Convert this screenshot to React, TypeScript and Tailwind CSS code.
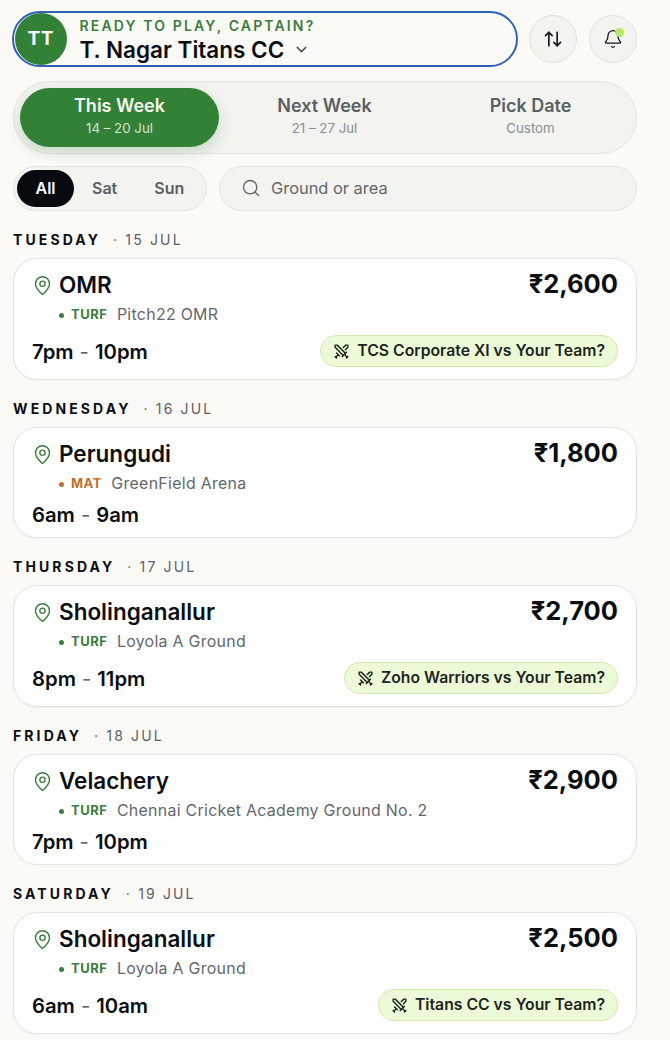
import { ArrowUpDown, Bell, ChevronDown, MapPin, Search, Swords } from "lucide-react";

type Item = {
  day: string;
  date: string;
  area: string;
  price: string;
  kind: "TURF" | "MAT";
  ground: string;
  time: [string, string];
  match?: string;
};

const items: Item[] = [
  { day: "TUESDAY", date: "15 JUL", area: "OMR", price: "₹2,600", kind: "TURF", ground: "Pitch22 OMR", time: ["7pm", "10pm"], match: "TCS Corporate XI vs Your Team?" },
  { day: "WEDNESDAY", date: "16 JUL", area: "Perungudi", price: "₹1,800", kind: "MAT", ground: "GreenField Arena", time: ["6am", "9am"] },
  { day: "THURSDAY", date: "17 JUL", area: "Sholinganallur", price: "₹2,700", kind: "TURF", ground: "Loyola A Ground", time: ["8pm", "11pm"], match: "Zoho Warriors vs Your Team?" },
  { day: "FRIDAY", date: "18 JUL", area: "Velachery", price: "₹2,900", kind: "TURF", ground: "Chennai Cricket Academy Ground No. 2", time: ["7pm", "10pm"] },
  { day: "SATURDAY", date: "19 JUL", area: "Sholinganallur", price: "₹2,500", kind: "TURF", ground: "Loyola A Ground", time: ["6am", "10am"], match: "Titans CC vs Your Team?" },
];

function Card({ item }: { item: Item }) {
  const turf = item.kind === "TURF";
  return (
    <section>
      <div className="flex h-[20px] items-center text-[14px] leading-[20px]">
        <span className="font-bold tracking-[3.1px] text-[#0b0f14]">{item.day}</span>
        <span className="ml-[12px] font-normal tracking-[2.15px] text-[#5b6066]">· {item.date}</span>
      </div>
      <div className={`mt-[8px] rounded-[24px] border border-[#e4e4e0] bg-white pl-[18px] pr-[18px] pt-[9px] ${item.match ? "pb-[12px]" : "pb-[8px]"} shadow-[0_1px_3px_rgba(0,0,0,0.03)]`}>
        <div className="flex items-start justify-between">
          <div className="flex items-center gap-[6px]">
            <MapPin size={21} strokeWidth={1.6} className="text-[#3a7d3c]" />
            <span className="text-[22.5px] leading-[34px] font-semibold text-[#0b0f14]">{item.area}</span>
          </div>
          <span className="text-[25.5px] leading-[32px] font-bold text-[#0b0f14]">{item.price}</span>
        </div>
        <div className="mt-[3px] flex h-[20px] items-center pl-[27px]">
          <span className={`h-[5px] w-[5px] rounded-full ${turf ? "bg-[#3a7d3c]" : "bg-[#c2702a]"}`} />
          <span className={`ml-[7px] text-[13px] font-bold tracking-[0.5px] ${turf ? "text-[#3a7d3c]" : "text-[#c2702a]"}`}>{item.kind}</span>
          <span className="ml-[9.5px] text-[15.9px] tracking-[0.3px] text-[#63676c]">{item.ground}</span>
        </div>
        <div className={`flex items-center justify-between ${item.match ? "mt-[10px] h-[32px]" : "mt-[7px] h-[28px]"}`}>
          <div className={`flex items-center text-[20.3px] font-semibold text-[#0b0f14] ${item.match ? "pt-[2px]" : ""}`}>
            <span>{item.time[0]}</span>
            <span className="mx-[6px] font-normal text-[#63676c]">-</span>
            <span>{item.time[1]}</span>
          </div>
          {item.match && (
            <div className="flex h-[32px] items-center gap-[7px] rounded-full border border-[#d3eaaf] bg-[#edfad8] pl-[12px] pr-[12px] text-[15.75px] font-semibold text-[#1c2420]">
              <Swords size={17} strokeWidth={2} />
              <span>{item.match}</span>
            </div>
          )}
        </div>
      </div>
    </section>
  );
}

export default function App() {
  return (
    <div className="h-[1040px] w-[670px] overflow-hidden bg-[#fbfaf7] pl-[13px] pr-[33px] pt-[11px] font-['Inter',sans-serif]">
      <header className="-ml-[1px] flex items-center gap-[11px]">
        <div className="flex h-[56px] flex-1 items-center rounded-full border-[2.5px] border-[#2f62b5] bg-[#fbfaf7] pl-[0.5px]">
          <div className="flex h-[52px] w-[52.5px] shrink-0 items-center justify-center rounded-full bg-[#338037] text-[19px] font-bold tracking-[0.5px] text-white">TT</div>
          <div className="ml-[12.5px] pt-[3px]">
            <div className="text-[14px] leading-[17px] font-semibold tracking-[2.15px] text-[#3a7d3c]">READY TO PLAY, CAPTAIN?</div>
            <div className="mt-[1px] flex items-center gap-[9px] text-[22.5px] leading-[30px] font-semibold text-[#0b0f14]">
              T. Nagar Titans CC
              <ChevronDown size={17} strokeWidth={2} className="text-[#4b5055]" />
            </div>
          </div>
        </div>
        <button className="flex h-[48px] w-[48px] items-center justify-center rounded-full border border-[#e1e1dd] bg-[#f3f3f0] text-[#15191d]">
          <ArrowUpDown size={20} strokeWidth={2} />
        </button>
        <button className="relative ml-[1px] flex h-[48px] w-[48px] items-center justify-center rounded-full border border-[#e1e1dd] bg-[#f3f3f0] text-[#15191d]">
          <Bell size={20} strokeWidth={1.6} />
          <span className="absolute right-[12px] top-[12px] h-[9px] w-[9px] rounded-full bg-[#b5e86b]" />
        </button>
      </header>

      <nav className="mt-[14px] flex h-[73px] items-center rounded-full border border-[#e4e4e0] bg-[#f3f3f0] pl-[6px] pr-[2px]">
        <div className="flex h-[59px] w-[199px] flex-col items-center justify-center rounded-full bg-[#338037] pb-[4px] shadow-[0_6px_14px_rgba(51,128,55,0.22)]">
          <span className="text-[18px] leading-[23px] font-semibold text-[#f5f8f0]">This Week</span>
          <span className="mt-[2px] text-[13.3px] leading-[18px] text-[#cfe3cf]">14 – 20 Jul</span>
        </div>
        <div className="flex h-[59px] w-[211px] flex-col items-center justify-center pb-[4px]">
          <span className="text-[18px] leading-[23px] font-semibold text-[#5a5f64]">Next Week</span>
          <span className="mt-[2px] text-[13.3px] leading-[18px] text-[#8a8e92]">21 – 27 Jul</span>
        </div>
        <div className="flex h-[59px] flex-1 flex-col items-center justify-center pb-[4px] pr-[3px]">
          <span className="text-[18px] leading-[23px] font-semibold text-[#5a5f64]">Pick Date</span>
          <span className="mt-[2px] text-[13.3px] leading-[18px] text-[#8a8e92]">Custom</span>
        </div>
      </nav>

      <div className="mt-[12px] flex gap-[12px]">
        <div className="flex h-[45px] w-[194px] items-center rounded-full border border-[#e4e4e0] bg-[#f3f3f0] pb-[1px] pl-[3px] text-[16px] font-semibold">
          <span className="flex h-[37px] w-[57px] items-center justify-center rounded-full bg-[#070b10] text-white">All</span>
          <span className="ml-[18px] text-[#5a5f64]">Sat</span>
          <span className="ml-[37px] text-[#5a5f64]">Sun</span>
        </div>
        <div className="flex h-[45px] flex-1 items-center gap-[10px] rounded-full border border-[#e4e4e0] bg-[#f3f3f0] pb-[1px] pl-[21px] text-[16.4px] text-[#63676c]">
          <Search size={20} strokeWidth={1.7} />
          <span>Ground or area</span>
        </div>
      </div>

      <main className="mt-[19px] flex flex-col gap-[19px]">
        {items.map((item) => (
          <Card key={item.day} item={item} />
        ))}
      </main>
    </div>
  );
}
